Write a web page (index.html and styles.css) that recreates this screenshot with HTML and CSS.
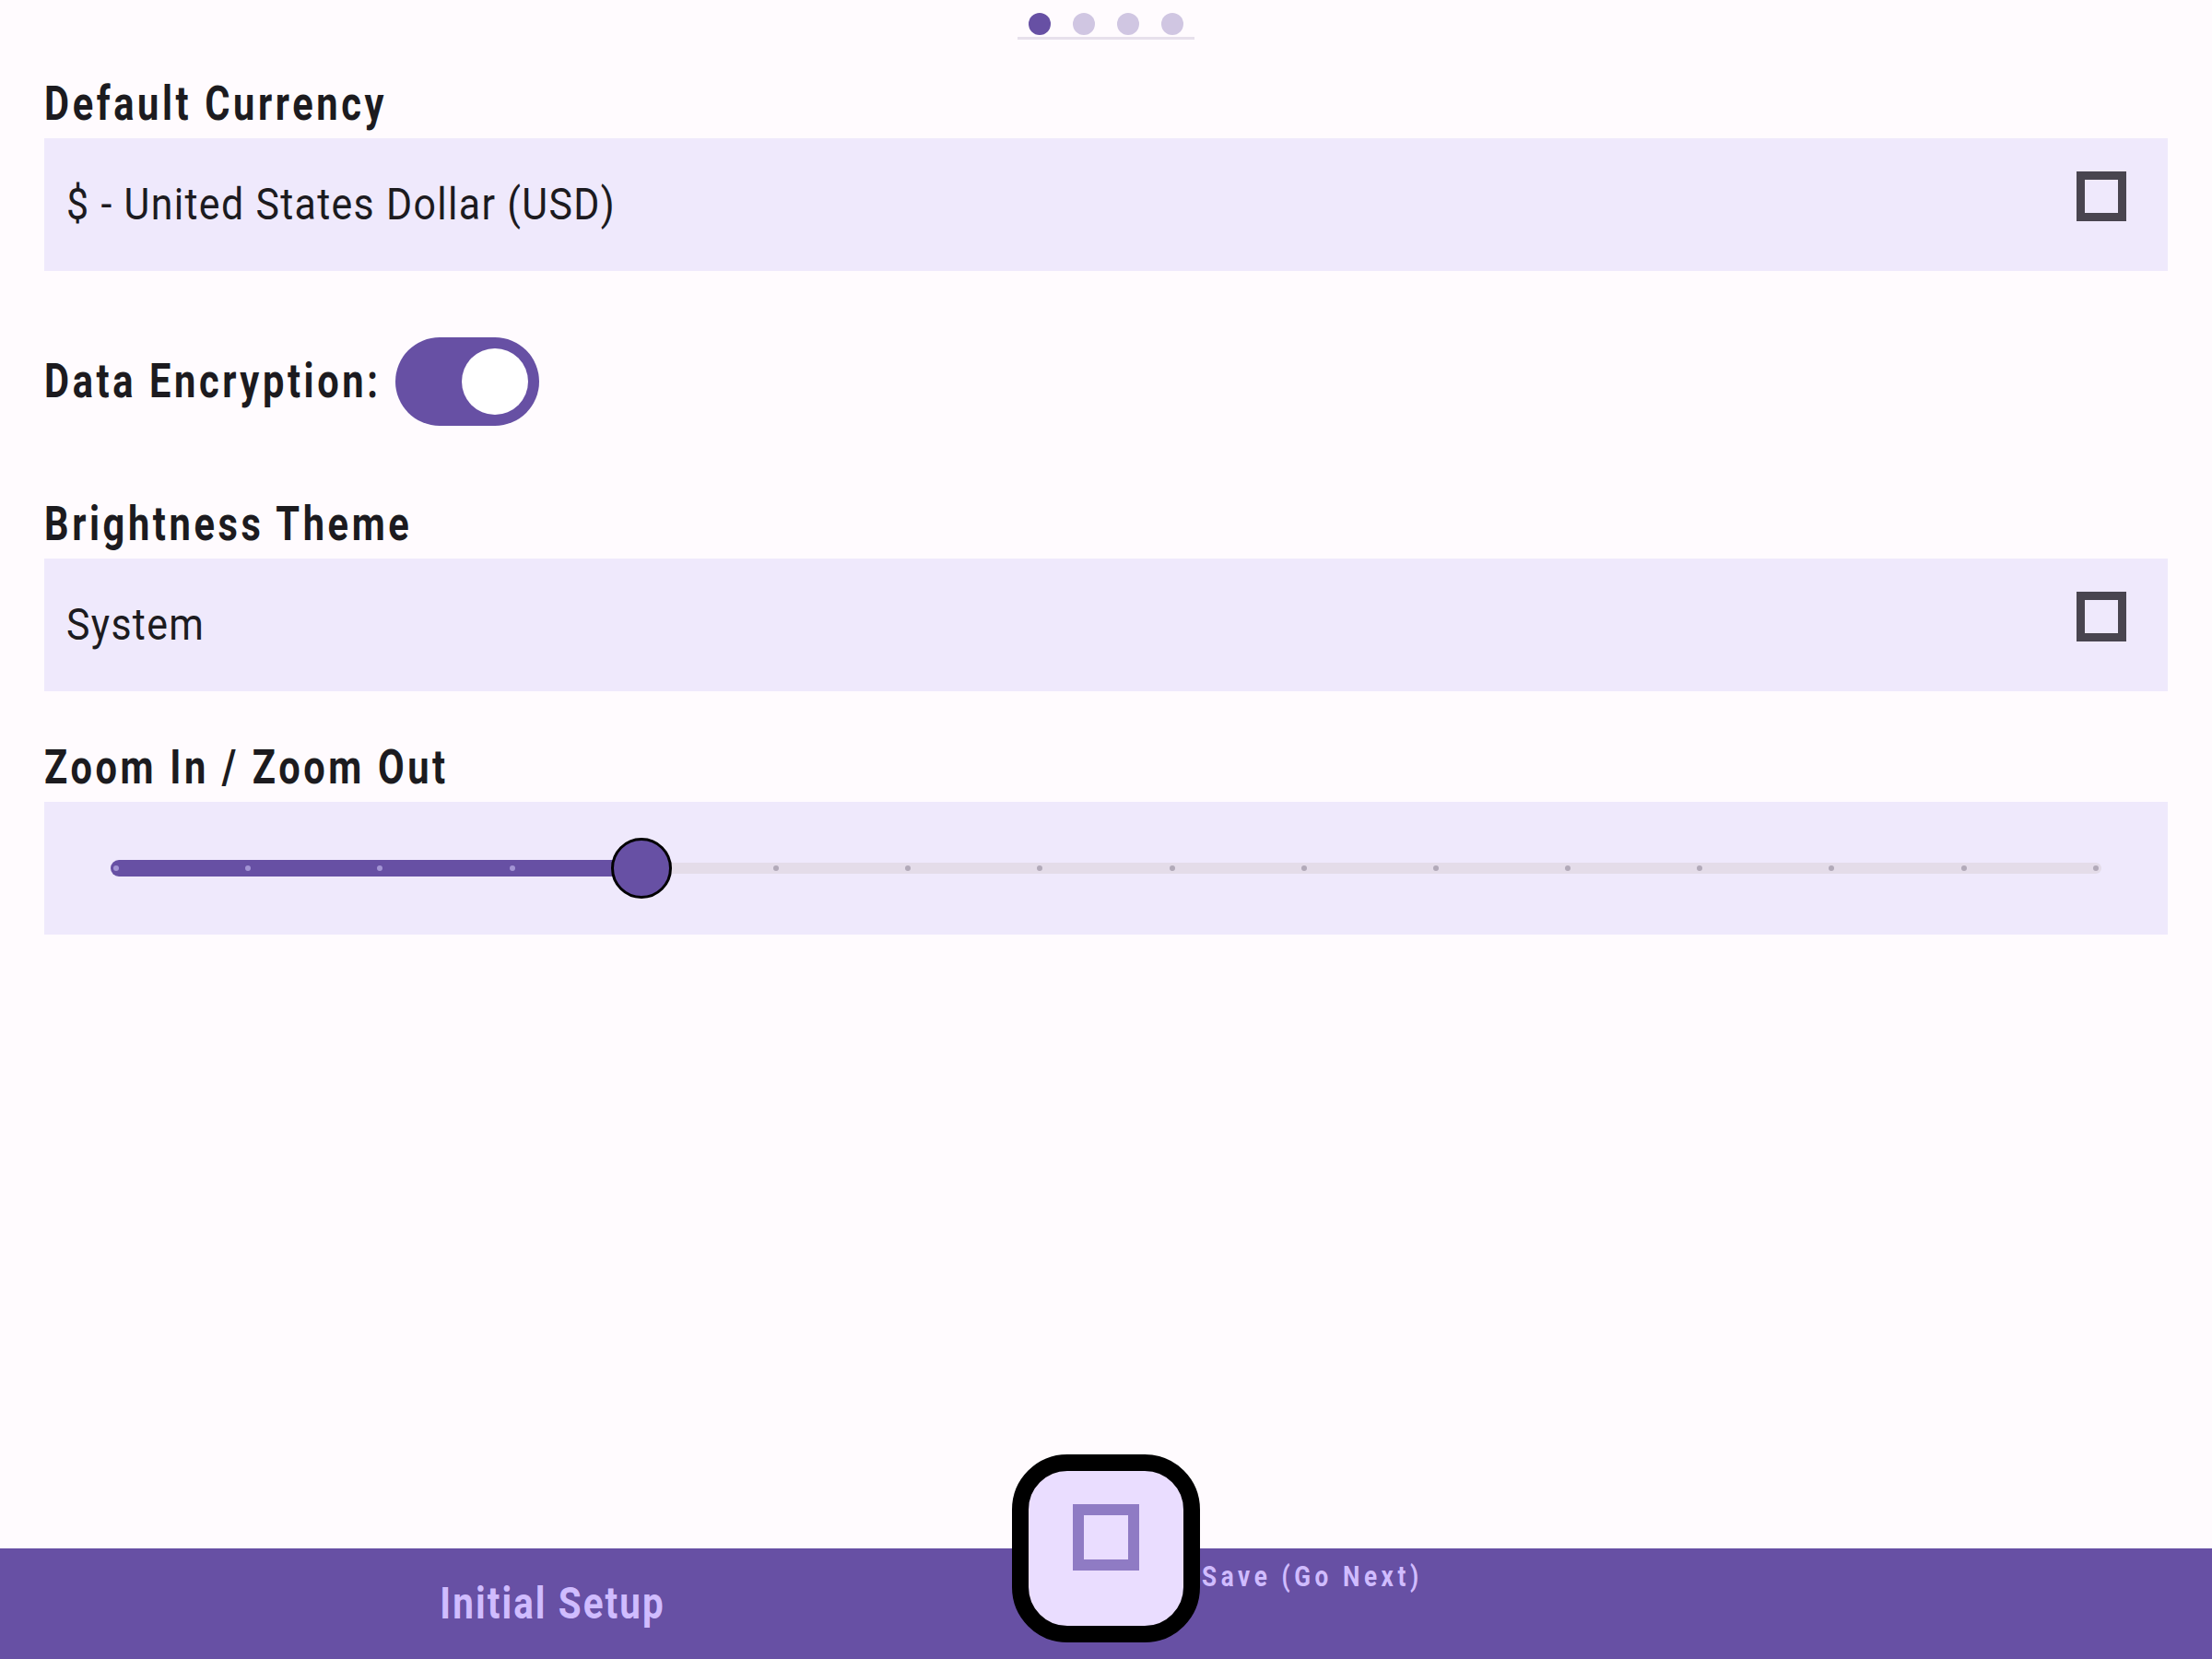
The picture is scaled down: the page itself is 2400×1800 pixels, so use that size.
FILE: index.html
```html
<!DOCTYPE html>
<html lang="en">
<head>
<meta charset="utf-8">
<title>Initial Setup</title>
<link rel="stylesheet" href="styles.css">
</head>
<body>
<div class="app">
  <div class="indicator">
    <div class="dots">
      <span class="dot active"></span>
      <span class="dot"></span>
      <span class="dot"></span>
      <span class="dot"></span>
    </div>
  </div>

  <main class="content">
    <h2 class="label first">Default Currency</h2>
    <div class="field">
      <span class="value">$ - United States Dollar (USD)</span>
      <span class="tofu"></span>
    </div>

    <div class="switch-row">
      <span class="label inline">Data Encryption:</span>
      <span class="switch"><span class="thumb"></span></span>
    </div>

    <h2 class="label theme">Brightness Theme</h2>
    <div class="field">
      <span class="value">System</span>
      <span class="tofu"></span>
    </div>

    <h2 class="label zoom">Zoom In / Zoom Out</h2>
    <div class="field slider-field">
      <div class="slider">
        <div class="track">
          <div class="track-active" style="width: 26.667%"></div>
          <div class="track-inactive"></div>
        </div>
        <div class="ticks">
          <span class="tick on"></span><span class="tick on"></span><span class="tick on"></span><span class="tick on"></span>
          <span class="tick"></span><span class="tick"></span><span class="tick"></span><span class="tick"></span>
          <span class="tick"></span><span class="tick"></span><span class="tick"></span><span class="tick"></span>
          <span class="tick"></span><span class="tick"></span><span class="tick"></span><span class="tick"></span>
        </div>
        <span class="slider-thumb" style="left: 26.667%"></span>
      </div>
    </div>
  </main>

  <footer class="bottom-bar">
    <div class="bar-half left"><span class="bar-title">Initial Setup</span></div>
    <div class="bar-half right"><span class="bar-action">Save (Go Next)</span></div>
    <button class="fab" type="button"><span class="fab-icon"></span></button>
  </footer>
</div>
</body>
</html>
```

FILE: styles.css
```css
* { box-sizing: border-box; }

html, body {
  margin: 0;
  padding: 0;
}

body {
  background: #FFFBFE;
  font-family: Roboto, "Noto Sans", "Liberation Sans", sans-serif;
  color: #1C1B1F;
}

.app {
  width: 2400px;
  height: 1800px;
  display: flex;
  flex-direction: column;
  overflow: hidden;
}

/* page indicator */
.indicator {
  display: flex;
  justify-content: center;
  padding-top: 14px;
}
.dots {
  width: 192px;
  display: flex;
  gap: 24px;
  padding: 0 12px 2px 12px;
  border-bottom: 3px solid #E7E0EC;
}
.dot {
  width: 24px;
  height: 24px;
  border-radius: 50%;
  background: #D0C6E2;
}
.dot.active { background: #6750A4; }

/* content */
.content {
  flex: 1;
  padding: 0 48px;
  display: flex;
  flex-direction: column;
}

/* condensed text look */
.label,
.value,
.bar-action {
  display: inline-block;
  transform-origin: left center;
}

.label {
  margin: 0;
  font-size: 52px;
  line-height: 64px;
  font-weight: 700;
  letter-spacing: 4.5px;
  color: #1C1B1F;
  transform: scaleX(0.80);
}
h2.label { display: block; margin-bottom: 5px; }
h2.first { margin-top: 38px; }
h2.theme { margin-top: 75px; }
h2.zoom { margin-top: 51px; }

.field {
  height: 144px;
  background: #EFE9FC;
  display: flex;
  align-items: center;
  justify-content: space-between;
  padding-left: 24px;
}
.value {
  font-size: 48px;
  line-height: 56px;
  font-weight: 400;
  letter-spacing: 1.5px;
  color: #1C1B1F;
  transform: scaleX(0.893);
}
.tofu {
  width: 54px;
  height: 54px;
  border: 9px solid #49454F;
  margin-right: 45px;
  margin-bottom: 18px;
}

/* switch */
.switch-row {
  margin-top: 72px;
  display: flex;
  align-items: center;
  height: 96px;
}
.switch-row .label {
  margin-right: -76px;
}
.switch {
  width: 156px;
  height: 96px;
  border-radius: 48px;
  background: #6750A4;
  display: flex;
  align-items: center;
  justify-content: flex-end;
  padding-right: 12px;
}
.thumb {
  width: 72px;
  height: 72px;
  border-radius: 50%;
  background: #FFFFFF;
}

/* slider */
.slider-field {
  padding: 0 72px;
  display: block;
}
.slider {
  position: relative;
  height: 144px;
  display: flex;
  align-items: center;
}
.track {
  width: 100%;
  display: flex;
  align-items: center;
}
.track-active {
  height: 18px;
  background: #6750A4;
  border-radius: 9px 0 0 9px;
}
.track-inactive {
  flex: 1;
  height: 12px;
  background: #E4DCE9;
  border-radius: 0 6px 6px 0;
}
.ticks {
  position: absolute;
  left: 3px;
  right: 3px;
  top: 69px;
  display: flex;
  justify-content: space-between;
}
.tick {
  width: 6px;
  height: 6px;
  border-radius: 50%;
  background: #B2AAB9;
}
.tick.on { background: #A394D4; }
.slider-thumb {
  position: absolute;
  top: 39px;
  width: 66px;
  height: 66px;
  margin-left: -33px;
  border-radius: 50%;
  background: #6750A4;
  border: 3px solid #000000;
}

/* bottom bar */
.bottom-bar {
  position: relative;
  height: 120px;
  background: #6750A4;
  display: grid;
  grid-template-columns: 1200px 1200px;
}
.bar-half {
  display: flex;
  align-items: center;
}
.bar-half.left { justify-content: center; }
.bar-half.right {
  padding-left: 104px;
  padding-bottom: 58px;
}
.bar-title {
  display: inline-block;
  font-size: 48px;
  line-height: 56px;
  font-weight: 700;
  letter-spacing: 2.5px;
  color: #D0BCFF;
  transform: scaleX(0.84);
  transform-origin: center center;
}
.bar-action {
  font-size: 31px;
  line-height: 36px;
  font-weight: 700;
  letter-spacing: 5.5px;
  color: #D0BCFF;
  transform: scaleX(0.84);
}
.fab {
  position: absolute;
  left: 1098px;
  top: -102px;
  width: 204px;
  height: 204px;
  padding: 0;
  border: 18px solid #000000;
  border-radius: 60px;
  background: #EADDFF;
  display: flex;
  align-items: center;
  justify-content: center;
}
.fab-icon {
  width: 72px;
  height: 72px;
  border: 12px solid #8F7BC4;
  margin-bottom: 24px;
}
```
